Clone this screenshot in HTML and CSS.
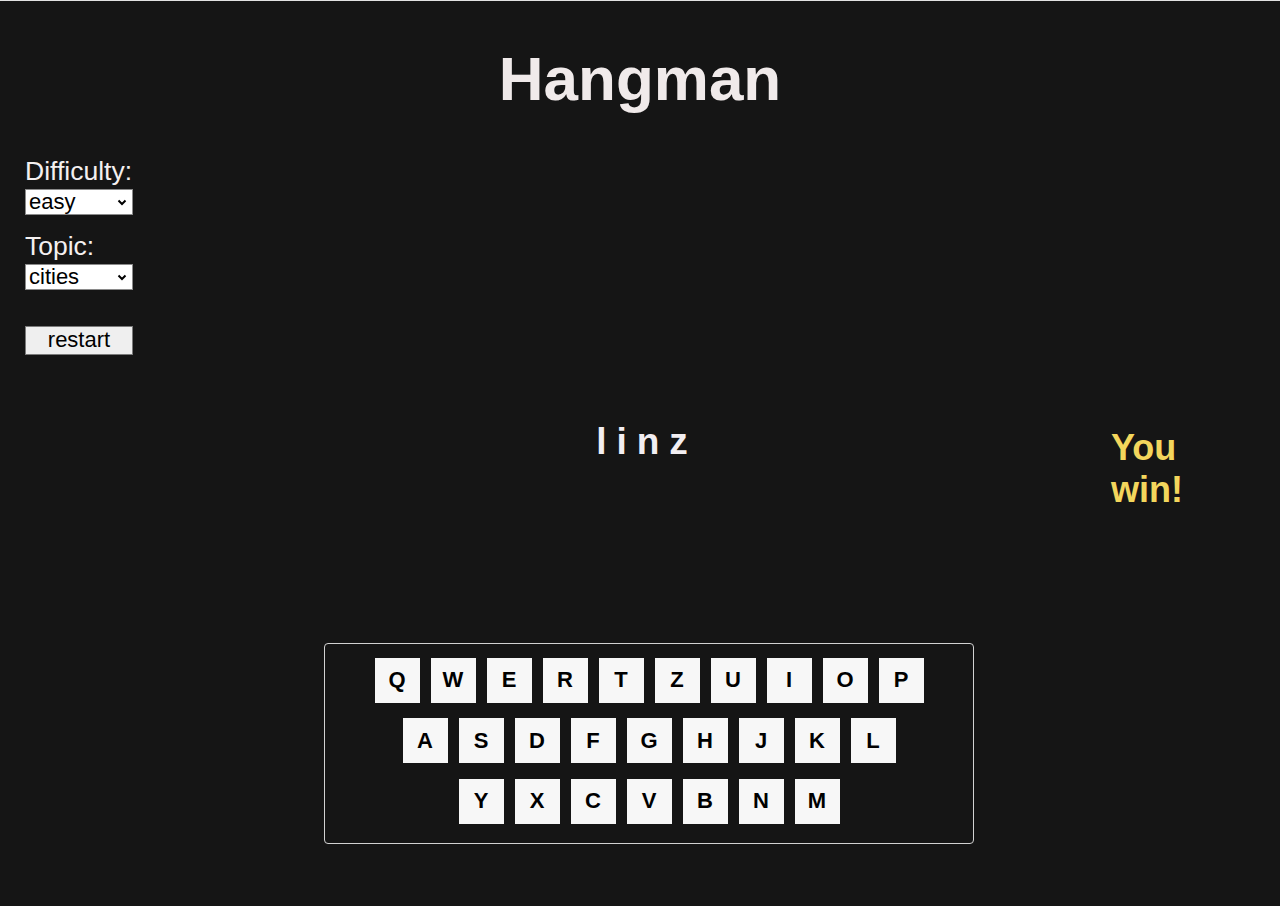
FILE: index.html
```html
<!DOCTYPE html>
<html lang="en">
<head>
<meta charset="utf-8">
<title>Hangman</title>
<link rel="stylesheet" href="styles.css">
</head>
<body>
  <h1 class="title">Hangman</h1>
  <div class="main">
    <aside class="sidebar">
      <label class="field-label" for="difficulty">Difficulty:</label>
      <div class="select-wrap">
        <select id="difficulty" class="select">
          <option>easy</option>
          <option>medium</option>
          <option>hard</option>
        </select>
        <svg class="chevron" width="10" height="7" viewBox="0 0 10 7"><path d="M1.5 1.5 L5 5 L8.5 1.5" fill="none" stroke="#000" stroke-width="2"/></svg>
      </div>
      <label class="field-label topic-label" for="topic">Topic:</label>
      <div class="select-wrap">
        <select id="topic" class="select">
          <option>cities</option>
          <option>animals</option>
        </select>
        <svg class="chevron" width="10" height="7" viewBox="0 0 10 7"><path d="M1.5 1.5 L5 5 L8.5 1.5" fill="none" stroke="#000" stroke-width="2"/></svg>
      </div>
      <button class="restart">restart</button>
    </aside>
    <section class="center">
      <div class="word">linz</div>
      <div class="keyboard">
        <div class="kb-row">
          <button class="key">Q</button><button class="key">W</button><button class="key">E</button><button class="key">R</button><button class="key">T</button><button class="key">Z</button><button class="key">U</button><button class="key">I</button><button class="key">O</button><button class="key">P</button>
        </div>
        <div class="kb-row">
          <button class="key">A</button><button class="key">S</button><button class="key">D</button><button class="key">F</button><button class="key">G</button><button class="key">H</button><button class="key">J</button><button class="key">K</button><button class="key">L</button>
        </div>
        <div class="kb-row">
          <button class="key">Y</button><button class="key">X</button><button class="key">C</button><button class="key">V</button><button class="key">B</button><button class="key">N</button><button class="key">M</button>
        </div>
      </div>
    </section>
    <aside class="status">
      <div class="result">You win!</div>
    </aside>
  </div>
</body>
</html>
```
FILE: styles.css
```css
html, body {
  margin: 0;
  padding: 0;
}
body {
  background: #151515;
  border-top: 1px solid #e2e2e2;
  font-family: "Liberation Sans", Arial, sans-serif;
  color: #f2eeee;
  min-height: 905px;
  box-sizing: border-box;
}
.title {
  margin: 42px 0 0;
  text-align: center;
  font-size: 62px;
  font-weight: bold;
  color: #f0eaea;
  line-height: 72px;
}
.main {
  display: flex;
  align-items: flex-start;
  margin-top: 42px;
}
.sidebar {
  margin-left: 25px;
  width: 108px;
  display: flex;
  flex-direction: column;
  flex: none;
}
.field-label {
  display: block;
  font-size: 26.5px;
  line-height: 29.4px;
  color: #f4f0f0;
  white-space: nowrap;
}
.topic-label {
  margin-top: 17px;
}
.select-wrap {
  position: relative;
  margin-top: 2.5px;
  width: 108px;
  height: 26px;
}
.select {
  appearance: none;
  -webkit-appearance: none;
  width: 108px;
  height: 26px;
  box-sizing: border-box;
  border: 1px solid #8a8a8a;
  border-radius: 0;
  background: #ffffff;
  color: #000;
  font-family: "Liberation Sans", Arial, sans-serif;
  font-size: 22px;
  line-height: 24px;
  padding: 0 0 0 3px;
  margin: 0;
}
.chevron {
  position: absolute;
  right: 6px;
  top: 10px;
  pointer-events: none;
}
.restart {
  margin-top: 36px;
  width: 108px;
  height: 29px;
  box-sizing: border-box;
  border: 1px solid #7a7a7a;
  border-radius: 0;
  background: #efefef;
  color: #000;
  font-family: "Liberation Sans", Arial, sans-serif;
  font-size: 22px;
  padding: 0;
  line-height: 26px;
}
.center {
  margin-left: 53px;
  width: 925px;
  flex: none;
  display: flex;
  flex-direction: column;
  align-items: center;
}
.word {
  margin-top: 264px;
  font-size: 37px;
  font-weight: bold;
  letter-spacing: 10px;
  padding-right: 3px;
  color: #f2eef2;
  line-height: 42.5px;
}
.keyboard {
  margin-top: 179px;
  width: 650px;
  height: 201px;
  box-sizing: border-box;
  border: 1px solid #d2d2d2;
  border-radius: 4px;
  padding-top: 14px;
  display: flex;
  flex-direction: column;
  align-items: center;
  gap: 15.5px;
}
.kb-row {
  display: flex;
  gap: 11px;
  padding-left: 1px;
}
.key {
  width: 45px;
  height: 45px;
  border: none;
  border-radius: 0;
  background: #f7f7f7;
  color: #000;
  font-family: "Liberation Sans", Arial, sans-serif;
  font-weight: bold;
  font-size: 22px;
  padding: 0;
  margin: 0;
}
.status {
  width: 112px;
  flex: none;
  padding-top: 270px;
}
.result {
  font-size: 36px;
  font-weight: bold;
  line-height: 42px;
  color: #f3d65c;
}
```
